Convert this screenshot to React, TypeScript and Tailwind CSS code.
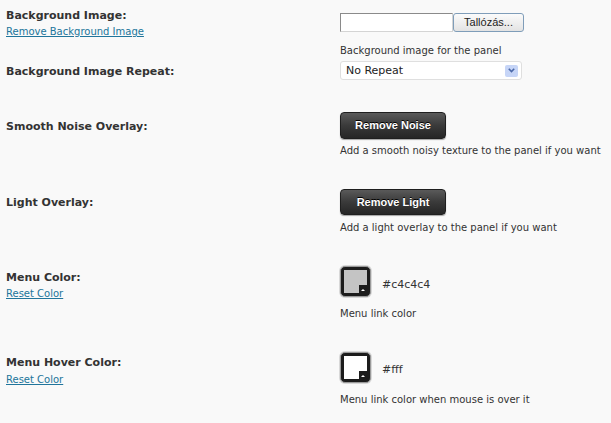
import React from "react";

const label = "font-bold text-[11px] leading-[13px] text-[#333]";
const small = "text-[10px] leading-[12px] text-[#333]";
const link = "text-[10px] leading-[12px] text-[#21759b] underline";

function DarkButton({ children, h }: { children: React.ReactNode; h: string }) {
  return (
    <button
      className={`w-[106px] ${h} rounded-[4px] border border-[#1f1f1f] bg-gradient-to-b from-[#5a5a5a] via-[#3a3a3a] to-[#262626] text-white font-bold text-[11px] [font-family:'Liberation_Sans',Arial,sans-serif] shadow-[0_1px_1px_rgba(0,0,0,0.35)] [text-shadow:0_-1px_0_#000]`}
    >
      {children}
    </button>
  );
}

function Swatch({ color }: { color: string }) {
  return (
    <div className="relative w-[31px] h-[31px] rounded-[5px] bg-[#1c1c1c] border border-[#9a9a9a] shadow-[0_0_0_1px_#d8d8d8] p-[3px]">
      <div className="relative w-full h-full" style={{ backgroundColor: color }}>
        <div className="absolute right-0 bottom-0 w-[8px] h-[8px] bg-[#1c1c1c] flex items-center justify-center">
          <div className="w-0 h-0 border-l-[2px] border-r-[2px] border-b-[2px] border-l-transparent border-r-transparent border-b-white mt-[1px]" />
        </div>
      </div>
    </div>
  );
}

export default function App() {
  return (
    <div className="w-[611px] h-[423px] bg-[#f9f9f9] [font-family:'DejaVu_Sans',Verdana,sans-serif] overflow-hidden">
      {/* Row 1 */}
      <div className="flex h-[58px]">
        <div className="w-[340px] pl-[6px] pt-[9px]">
          <div className={label}>Background Image:</div>
          <div className={`${link} mt-[4px]`}>Remove Background Image</div>
        </div>
        <div className="pt-[13px]">
          <div className="flex h-[19px]">
            <div className="w-[113px] h-[19px] bg-white border border-[#8a8a8a] border-b-[#d4d4d4] border-r-[#d4d4d4]" />
            <button className="w-[71px] h-[19px] rounded-[3px] border border-[#7f9db9] bg-gradient-to-b from-[#fbfbfb] to-[#e3e3e3] text-[11px] leading-[17px] text-[#222] [font-family:'Liberation_Sans',Arial,sans-serif]">
              Tallózás...
            </button>
          </div>
          <div className={`${small} mt-[13px]`}>Background image for the panel</div>
        </div>
      </div>

      {/* Row 2 */}
      <div className="flex h-[48px]">
        <div className="w-[340px] pl-[6px] pt-[7px]">
          <div className={label}>Background Image Repeat:</div>
        </div>
        <div className="pt-[3px]">
          <div className="w-[182px] h-[19px] bg-white border border-[#dfdfdf] rounded-[3px] flex items-center justify-between pl-[5px] pr-[3px]">
            <span className="text-[11px] leading-[13px] text-[#222]">No Repeat</span>
            <span className="w-[13px] h-[12px] bg-[#c6d5f7] rounded-[2px] flex items-center justify-center">
              <svg width="7" height="5" viewBox="0 0 7 5">
                <path d="M0.8 0.8 L3.5 3.6 L6.2 0.8" fill="none" stroke="#4a68a8" strokeWidth="1.6" />
              </svg>
            </span>
          </div>
        </div>
      </div>

      {/* Row 3 */}
      <div className="flex h-[74px]">
        <div className="w-[340px] pl-[6px] pt-[14px]">
          <div className={label}>Smooth Noise Overlay:</div>
        </div>
        <div className="pt-[6px]">
          <DarkButton h="h-[27px]">Remove Noise</DarkButton>
          <div className={`${small} mt-[6px]`}>Add a smooth noisy texture to the panel if you want</div>
        </div>
      </div>

      {/* Row 4 */}
      <div className="flex h-[78px]">
        <div className="w-[340px] pl-[6px] pt-[16px]">
          <div className={label}>Light Overlay:</div>
        </div>
        <div className="pt-[9px]">
          <DarkButton h="h-[26px]">Remove Light</DarkButton>
          <div className={`${small} mt-[7px]`}>Add a light overlay to the panel if you want</div>
        </div>
      </div>

      {/* Row 5 */}
      <div className="flex h-[87px]">
        <div className="w-[340px] pl-[6px] pt-[13px]">
          <div className={label}>Menu Color:</div>
          <div className={`${link} mt-[4px]`}>Reset Color</div>
        </div>
        <div className="pt-[8px]">
          <div className="flex items-center">
            <Swatch color="#c4c4c4" />
            <span className="ml-[11px] mt-[6px] text-[11px] leading-[13px] text-[#333]">#c4c4c4</span>
          </div>
          <div className={`${small} mt-[11px]`}>Menu link color</div>
        </div>
      </div>

      {/* Row 6 */}
      <div className="flex h-[78px]">
        <div className="w-[340px] pl-[6px] pt-[11px]">
          <div className={label}>Menu Hover Color:</div>
          <div className={`${link} mt-[5px]`}>Reset Color</div>
        </div>
        <div className="pt-[7px]">
          <div className="flex items-center">
            <Swatch color="#ffffff" />
            <span className="ml-[11px] mt-[4px] text-[11px] leading-[13px] text-[#333]">#fff</span>
          </div>
          <div className={`${small} mt-[11px]`}>Menu link color when mouse is over it</div>
        </div>
      </div>
    </div>
  );
}
